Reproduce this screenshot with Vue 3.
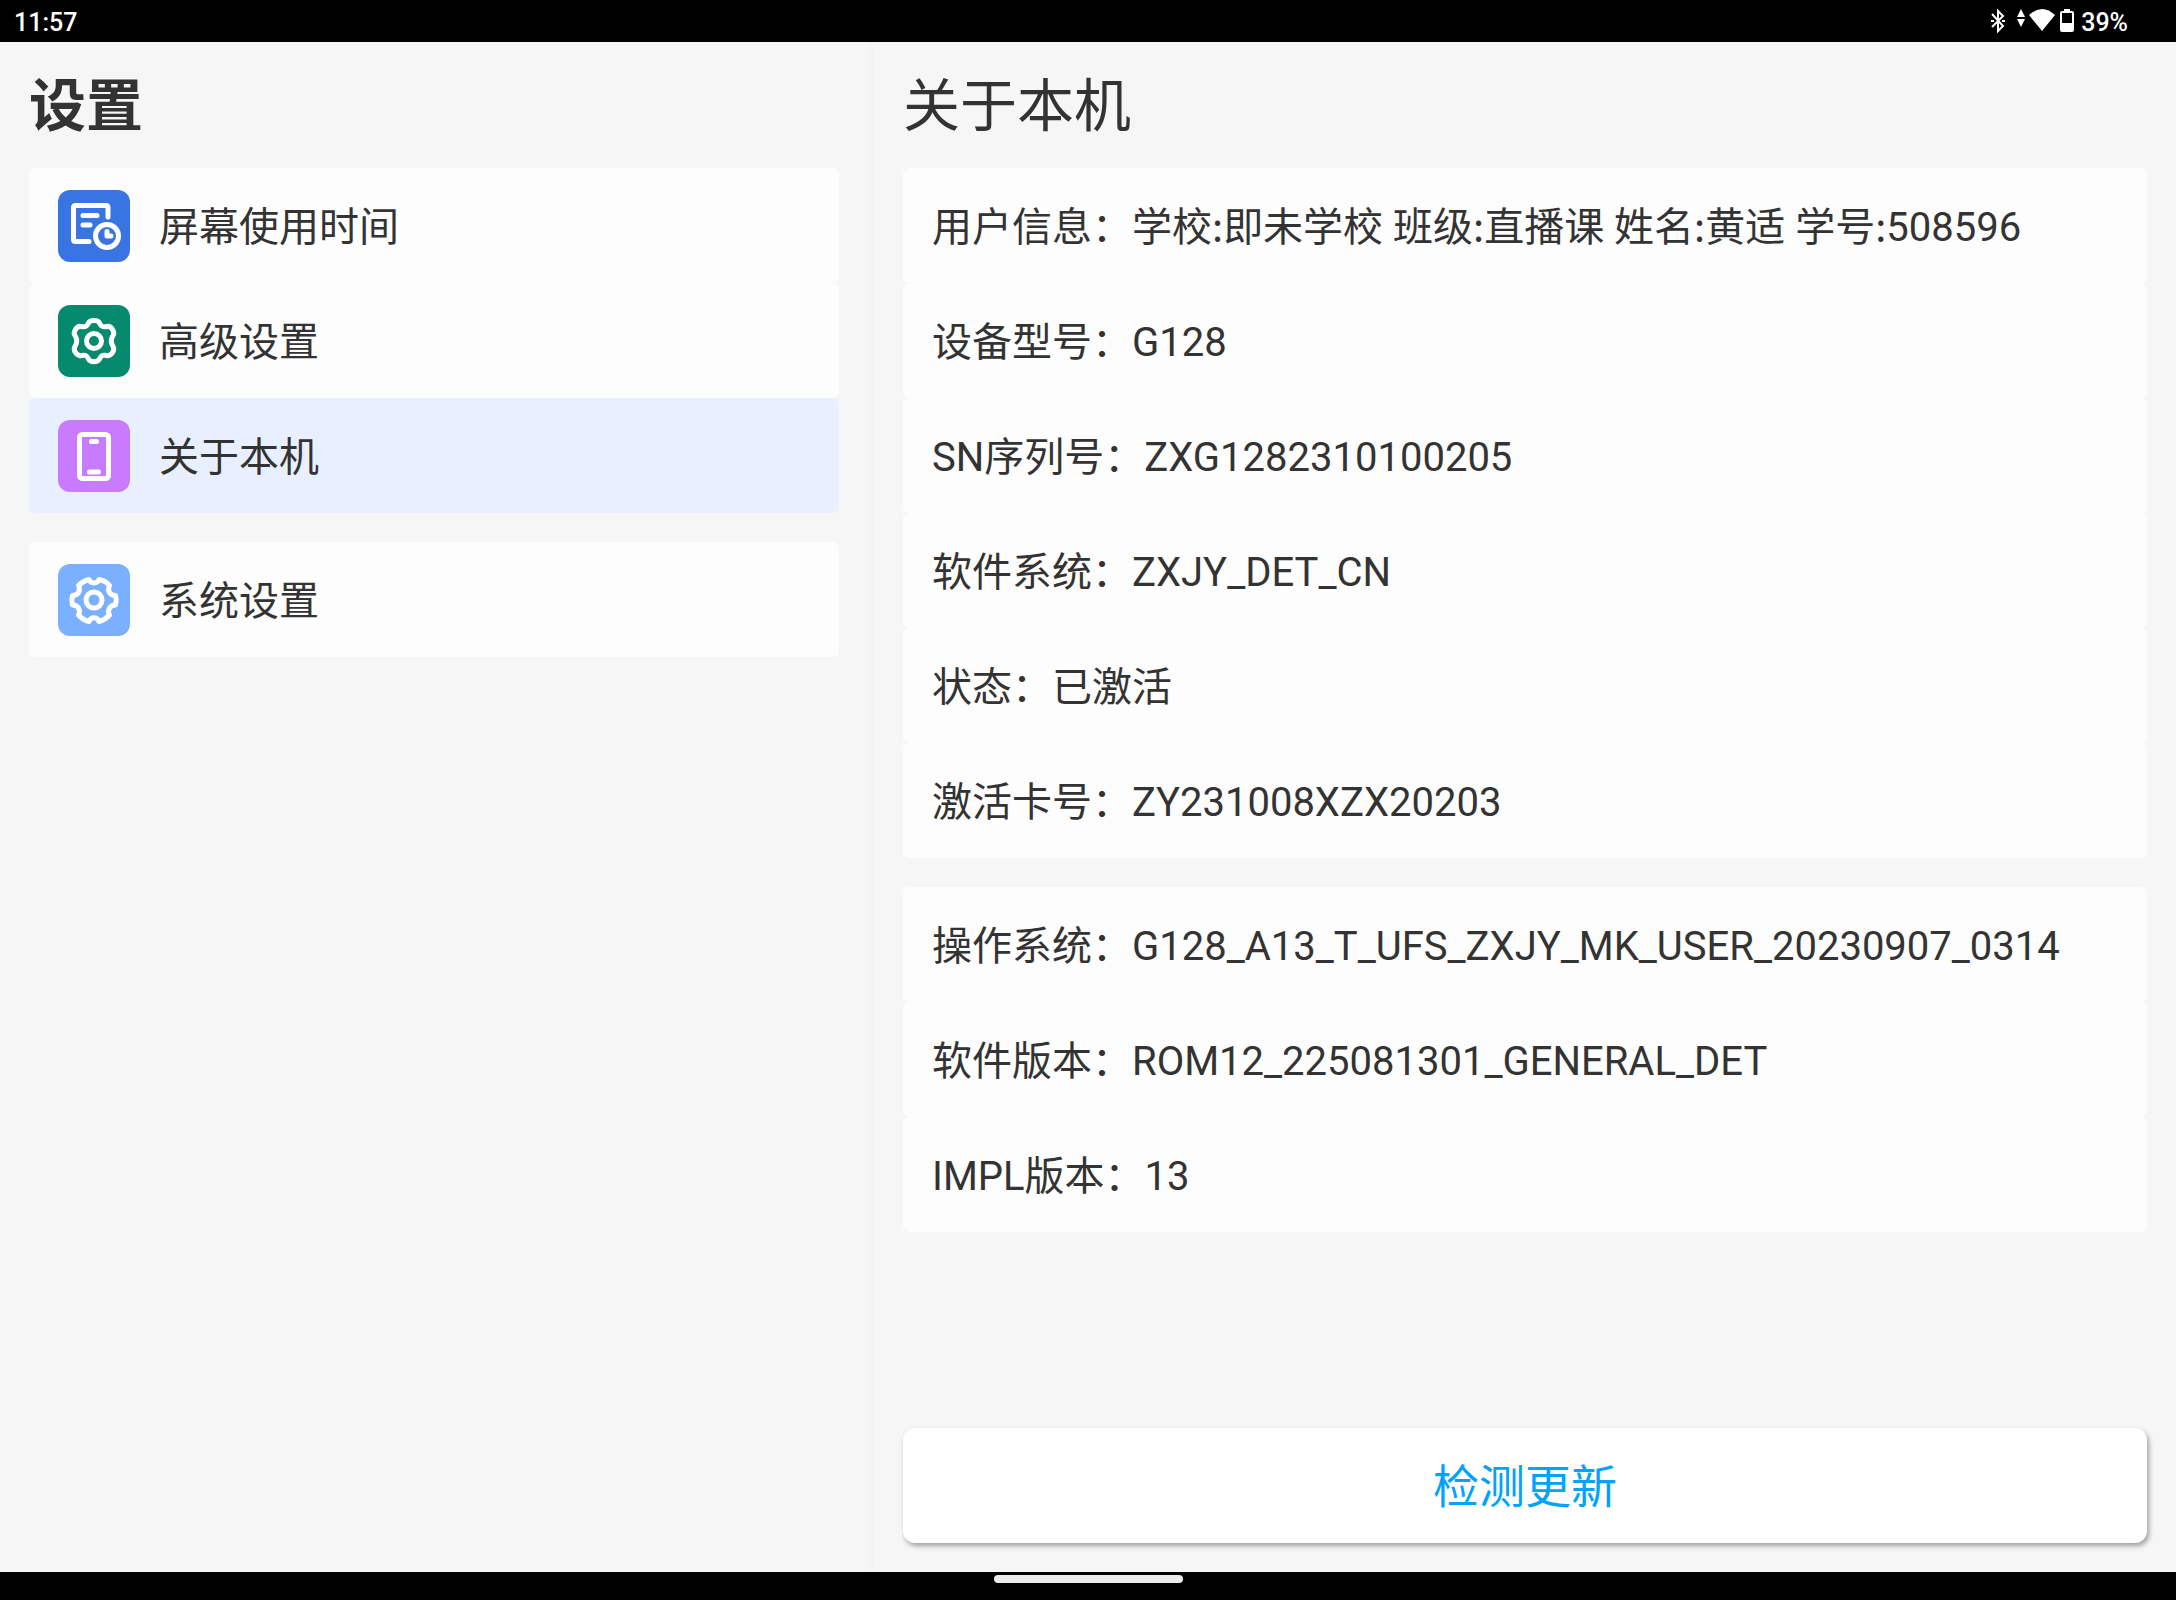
<script setup>
import { ref } from 'vue'

const menuGroups = [
  [
    { id: 'usage', label: '屏幕使用时间' },
    { id: 'advanced', label: '高级设置' },
    { id: 'about', label: '关于本机' },
  ],
  [{ id: 'system', label: '系统设置' }],
]

const active = ref('about')

const infoGroups = [
  [
    {
      name: '用户信息',
      fields: [
        ['学校:', '即未学校'],
        ['班级:', '直播课'],
        ['姓名:', '黄适'],
        ['学号:', '508596'],
      ],
    },
    { name: '设备型号', value: 'G128' },
    { name: 'SN序列号', value: 'ZXG1282310100205' },
    { name: '软件系统', value: 'ZXJY_DET_CN' },
    { name: '状态', value: '已激活' },
    { name: '激活卡号', value: 'ZY231008XZX20203' },
  ],
  [
    { name: '操作系统', value: 'G128_A13_T_UFS_ZXJY_MK_USER_20230907_0314' },
    { name: '软件版本', value: 'ROM12_225081301_GENERAL_DET' },
    { name: 'IMPL版本', value: '13' },
  ],
]
</script>

<template>
  <div class="screen">
    <header class="status-bar">
      <span>11:57</span>
      <div class="status-right">
        <svg width="91" height="42" viewBox="0 0 91 42" aria-hidden="true">
          <path d="M2 14 13 26 8 31V11l5 5L2 27" fill="none" stroke="#fff" stroke-width="2" />
          <path d="M1 20h3v2H1zM12 20h3v2h-3z" fill="#fff" />
          <path d="M31 9l4 8h-8zM27 19h8l-4 8z" fill="#fff" />
          <path d="M39 15Q52 3 65 15L52 31z" fill="#fff" />
          <path d="M74 9h6v2h2q2 0 2 2v17q0 2-2 2H72q-2 0-2-2V13q0-2 2-2h2z" fill="#fff" />
          <path d="M72 13h10v10H72z" fill="#000" />
        </svg>
        <span>39%</span>
      </div>
    </header>

    <main class="panes">
      <nav class="pane" aria-label="设置">
        <h1 class="title strong">设置</h1>
        <ul v-for="(group, g) in menuGroups" :key="g" class="group">
          <li v-for="item in group" :key="item.id">
            <button
              type="button"
              class="row menu-item"
              :class="{ active: active === item.id }"
              :aria-current="active === item.id ? 'page' : undefined"
              @click="active = item.id"
            >
              <svg class="icon" :class="item.id" viewBox="0 0 72 72" aria-hidden="true">
                <template v-if="item.id === 'usage'">
                  <path d="M50 27V17.500Q50 15.500 48 15.500H17.500Q15.500 15.500 15.500 17.500V49.500Q15.500 51.500 17.500 51.500H31" />
                  <path d="M25 25.500H39M25 35H32" />
                  <circle cx="49" cy="46" r="11.500" />
                  <path d="M49 41.500V46H53" />
                </template>
                <template v-else-if="item.id === 'advanced'">
                  <path
                    d="M30.500 18C32 14.500 40 14.500 41.500 18C43 21.500 45 22.500 49 21.500C53 20.500 57.500 27 55 30.500C52.500 34.500 52.500 37.500 55 41.500C57.500 45 53 51.500 49 50.500C45 49.500 43 50.500 41.500 54C40 57.500 32 57.500 30.500 54C29 50.500 27 49.500 23 50.500C19 51.500 14.500 45 17 41.500C19.500 37.500 19.500 34.500 17 30.500C14.500 27 19 20.500 23 21.500C27 22.500 29 21.500 30.500 18Z"
                  />
                  <circle cx="36" cy="36" r="7.500" />
                </template>
                <template v-else-if="item.id === 'about'">
                  <rect x="21.500" y="14.500" width="29" height="44" rx="3" />
                  <path d="M33.500 21.500H38.500M31.500 52H40.500" />
                </template>
                <template v-else>
                  <path
                    d="M31 15.500C33 20 39 20 41 15.500Q48 17 51.500 21.500C49 27 52 31.500 57.500 31.500Q59 36 57.500 41C52 41 49 46 51.500 51Q47 56 41 57.500C39 52.500 33 52.500 31 57.500Q25 56 20.500 51C23 46 20 41 14.500 41Q13 36 14.500 31.500C20 31.500 23 27 20.500 21.500Q25 17 31 15.500Z"
                  />
                  <circle cx="36" cy="36" r="8" />
                </template>
              </svg>
              <span class="label">{{ item.label }}</span>
            </button>
          </li>
        </ul>
      </nav>

      <div class="divider"></div>

      <section class="pane">
        <h2 class="title">关于本机</h2>
        <dl v-for="(group, g) in infoGroups" :key="g" class="group">
          <div v-for="info in group" :key="info.name" class="row">
            <dt>{{ info.name }}：</dt>
            <dd v-if="info.fields">
              <template v-for="([key, value], i) in info.fields" :key="key">{{ i ? ' ' : '' }}<span class="key">{{ key }}</span>{{ value }}</template>
            </dd>
            <dd v-else>{{ info.value }}</dd>
          </div>
        </dl>
        <button type="button" class="update">检测更新</button>
      </section>
    </main>

    <footer class="nav-bar"><div class="handle"></div></footer>
  </div>
</template>

<style>
body {
  margin: 0;
}
</style>

<style scoped>
.screen {
  display: flex;
  flex-direction: column;
  min-height: 100vh;
  background: #f6f6f6;
  color: #333;
  font-family: Roboto, 'Noto Sans CJK SC', sans-serif;
  font-size: 40px;
}

.status-bar {
  display: flex;
  align-items: flex-start;
  justify-content: space-between;
  height: 42px;
  padding: 0 48px 0 14px;
  background: #000;
  color: #fff;
  font-size: 25px;
  font-weight: 500;
  line-height: 45px;
}

.status-right {
  display: flex;
}

.panes {
  display: grid;
  flex: 1;
  grid-template-columns: minmax(0, 2fr) 6px minmax(0, 3fr);
}

.pane {
  display: flex;
  flex-direction: column;
  padding: 0 29px 29px;
}

.divider {
  background: #f4f4f4;
}

.title {
  box-sizing: border-box;
  height: 126px;
  margin: 0;
  padding-top: 2px;
  font-size: 57px;
  font-weight: 400;
  line-height: 126px;
}

.title.strong {
  font-weight: 700;
}

.group {
  margin: 0 0 29px;
  padding: 0;
  list-style: none;
}

.row {
  display: flex;
  align-items: center;
  box-sizing: border-box;
  width: 100%;
  min-height: 115px;
  padding: 0 29px;
  border-radius: 6px;
  background: #fdfdfd;
  line-height: 60px;
}

.menu-item {
  gap: 29px;
  border: 0;
  color: inherit;
  font-family: inherit;
  font-size: inherit;
  text-align: left;
  cursor: pointer;
}

.menu-item.active {
  background: #e8f0ff;
}

.label,
dt,
dd {
  padding-top: 4px;
}

.icon {
  flex: none;
  width: 72px;
  height: 72px;
  border-radius: 12px;
  fill: none;
  stroke: #fff;
  stroke-width: 5;
  stroke-linecap: round;
  stroke-linejoin: round;
}

.icon.usage {
  background: #3875e3;
}

.icon.advanced {
  background: #068a6d;
}

.icon.about {
  background: #c97bff;
}

.icon.system {
  background: #7bafff;
}

dt {
  flex: none;
}

dd {
  margin: 0;
}

.key {
  font-family: 'Noto Sans CJK SC', sans-serif;
  line-height: 1;
}

.update {
  min-height: 115px;
  margin-top: auto;
  padding: 0 0 6px;
  border: 0;
  border-radius: 12px;
  background: #fff;
  box-shadow: 2px 3px 5px rgba(0, 0, 0, 0.35);
  color: #03a2fb;
  font-family: inherit;
  font-size: 46px;
  cursor: pointer;
}

.nav-bar {
  display: flex;
  justify-content: center;
  align-items: flex-start;
  box-sizing: border-box;
  height: 28px;
  padding-top: 3px;
  background: #000;
}

.handle {
  width: 189px;
  height: 8px;
  border-radius: 4px;
  background: #ebebeb;
}
</style>
